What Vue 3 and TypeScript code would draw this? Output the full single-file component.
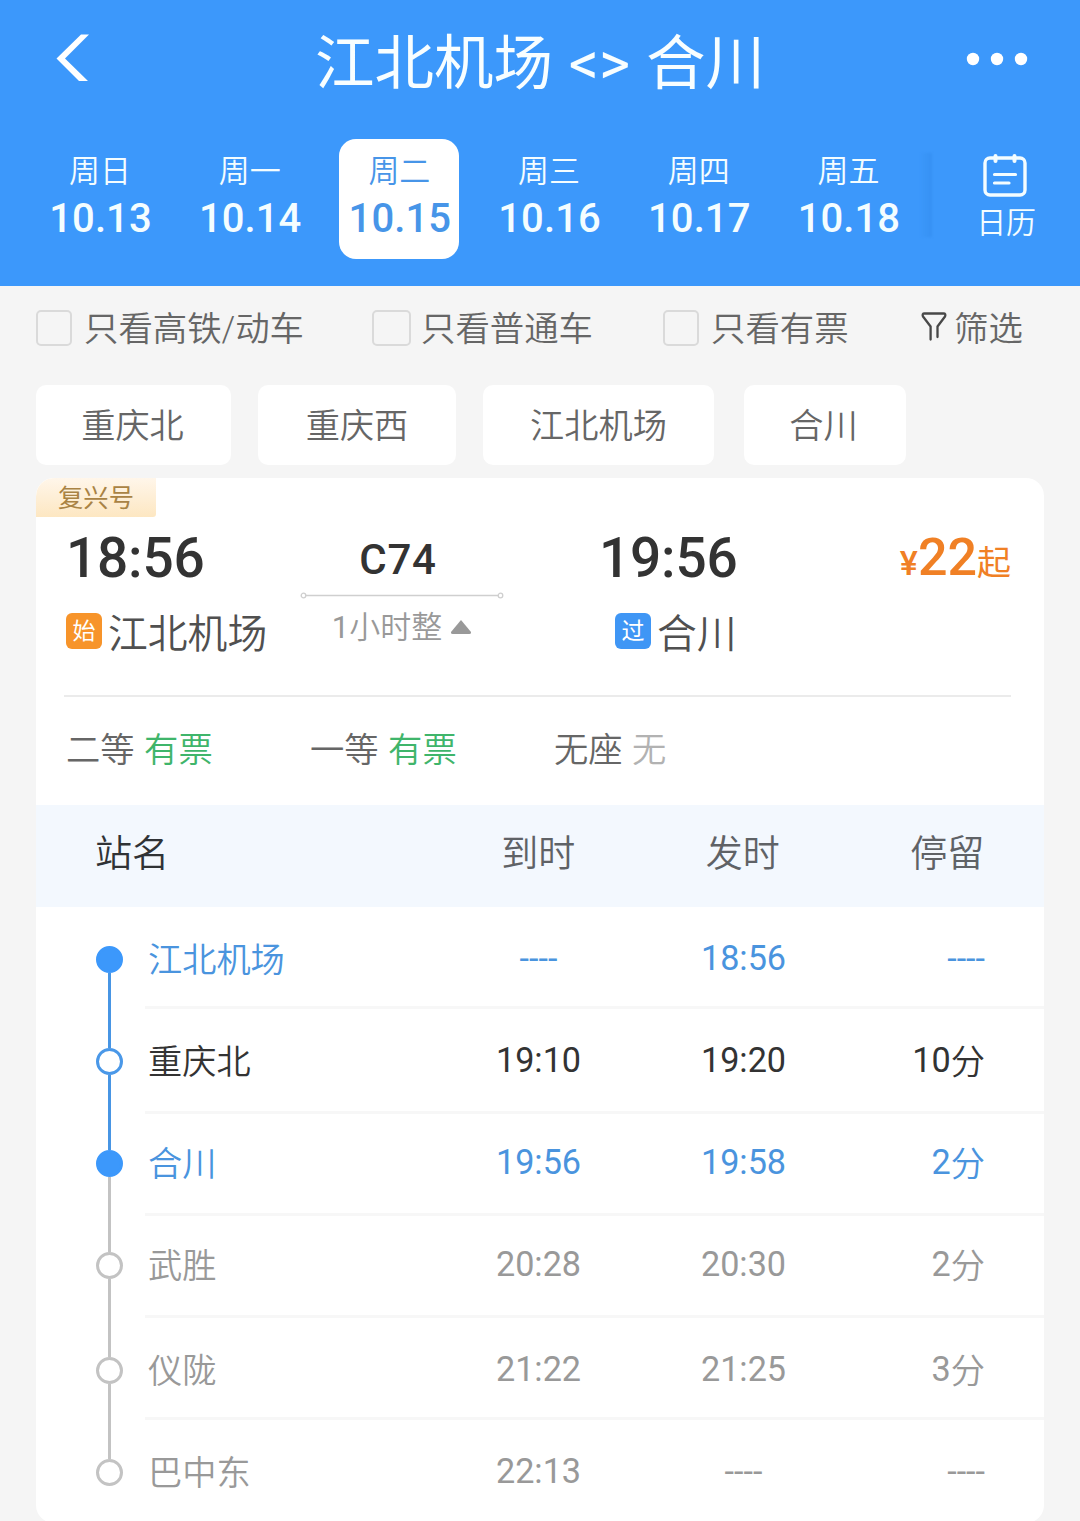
<script setup lang="ts">
interface Day { week: string; date: string; active?: boolean }
interface Stop {
  name: string
  arrive: string
  depart: string
  stay: string
  unit?: string
  tone: 'blue' | 'dark' | 'grey'
  solid?: boolean
  above?: string
  below?: string
  height: number
  center: number
}

const days: Day[] = [
  { week: '周日', date: '10.13' },
  { week: '周一', date: '10.14' },
  { week: '周二', date: '10.15', active: true },
  { week: '周三', date: '10.16' },
  { week: '周四', date: '10.17' },
  { week: '周五', date: '10.18' },
]

const checks = [
  { label: '只看高铁/动车', cls: 'c1' },
  { label: '只看普通车', cls: 'c2' },
  { label: '只看有票', cls: 'c3' },
]

const stations = [
  { label: '重庆北', cls: 's1' },
  { label: '重庆西', cls: 's2' },
  { label: '江北机场', cls: 's3' },
  { label: '合川', cls: 's4' },
]

const seats = [
  { kind: '二等', left: '有票', ok: true },
  { kind: '一等', left: '有票', ok: true },
  { kind: '无座', left: '无', ok: false },
]

const stops: Stop[] = [
  { name: '江北机场', arrive: '----', depart: '18:56', stay: '----', tone: 'blue', solid: true, below: 'on', height: 102, center: 52.5 },
  { name: '重庆北', arrive: '19:10', depart: '19:20', stay: '10', unit: '分', tone: 'dark', above: 'on', below: 'on', height: 105, center: 52.5 },
  { name: '合川', arrive: '19:56', depart: '19:58', stay: '2', unit: '分', tone: 'blue', solid: true, above: 'on', below: 'off', height: 102, center: 49.5 },
  { name: '武胜', arrive: '20:28', depart: '20:30', stay: '2', unit: '分', tone: 'grey', above: 'off', below: 'off', height: 102, center: 49.5 },
  { name: '仪陇', arrive: '21:22', depart: '21:25', stay: '3', unit: '分', tone: 'grey', above: 'off', below: 'off', height: 102, center: 52.5 },
  { name: '巴中东', arrive: '22:13', depart: '----', stay: '----', tone: 'grey', above: 'off', height: 103, center: 52.5 },
]
</script>

<template>
  <div class="page">
    <header class="top">
      <div class="nav">
        <svg class="back" width="36" height="50" viewBox="0 0 36 50">
          <path d="M26 1.500h8L10 25.5 33 48h-9L1.500 25.5z" fill="#fff" />
        </svg>
        <h1 class="title">江北机场 &lt;&gt; 合川</h1>
        <svg class="more" width="62" height="14" viewBox="0 0 62 14" fill="#fff">
          <circle cx="7" cy="7" r="6.2" /><circle cx="31" cy="7" r="6.2" /><circle cx="55" cy="7" r="6.2" />
        </svg>
      </div>
      <div class="dates">
        <div v-for="d in days" :key="d.date" class="day" :class="{ active: d.active }">
          <span class="week">{{ d.week }}</span>
          <span class="date">{{ d.date }}</span>
        </div>
        <div class="shade"></div>
        <div class="calendar">
          <svg width="44" height="44" viewBox="0 0 44 44" fill="none" stroke="#f4fdff" stroke-linecap="round">
            <rect x="2" y="5" width="40" height="37" rx="5" stroke-width="3.4" />
            <path d="M12.500 3v5M31.500 3v5" stroke-width="4" />
            <path d="M11.500 21.500h21M11.500 30h14.500" stroke-width="3.2" />
          </svg>
          <span>日历</span>
        </div>
      </div>
    </header>

    <div class="filters">
      <label v-for="c in checks" :key="c.cls" class="check" :class="c.cls">
        <i class="box"></i><span>{{ c.label }}</span>
      </label>
      <div class="sift">
        <svg width="26" height="32" viewBox="0 0 26 32" fill="none" stroke="#484848" stroke-width="2.3" stroke-linecap="round" stroke-linejoin="round">
          <path d="M9.600 28.500V15.500L2 5.500Q.800 2.500 3.500 2.500H22.500Q25.200 2.500 24 5.500L16.500 15.500V26" />
        </svg>
        <span>筛选</span>
      </div>
    </div>

    <div class="stations">
      <div v-for="s in stations" :key="s.cls" class="chip" :class="s.cls">{{ s.label }}</div>
    </div>

    <section class="card">
      <div class="tag">复兴号</div>
      <div class="trip">
        <div class="from">
          <div class="clock">18:56</div>
          <div class="place"><b class="badge orange">始</b><span>江北机场</span></div>
        </div>
        <div class="middle">
          <div class="code">C74</div>
          <svg class="track" width="204" height="8" viewBox="0 0 204 8" fill="none" stroke="#cfcfcf" stroke-width="1.3">
            <circle cx="3.500" cy="3.500" r="2.300" /><path d="M6 3.500h192" /><circle cx="200.500" cy="3.500" r="2.300" />
          </svg>
          <div class="span"><span class="hours">1</span>小时整<svg width="22" height="16" viewBox="0 0 22 16"><path d="M11 1 21 13Q21.500 15 19.500 15H2.500Q.5 15 1 13z" fill="#999" /></svg></div>
        </div>
        <div class="to">
          <div class="clock">19:56</div>
          <div class="place"><b class="badge azure">过</b><span>合川</span></div>
        </div>
        <div class="price"><span class="yen">¥</span><span class="num">22</span><span class="up">起</span></div>
      </div>
      <div class="rule"></div>
      <div class="seats">
        <div v-for="s in seats" :key="s.kind" class="seat">
          {{ s.kind }}<span :class="s.ok ? 'yes' : 'no'">{{ s.left }}</span>
        </div>
      </div>

      <div class="head">
        <span class="h-name">站名</span><span>到时</span><span>发时</span><span>停留</span>
      </div>
      <div v-for="s in stops" :key="s.name" class="stop" :class="s.tone" :style="{ height: s.height + 'px' }">
        <div class="rail">
          <i class="seg" :class="s.above" :style="{ height: s.center - 13.5 + 'px' }"></i>
          <i class="dot" :class="{ solid: s.solid, on: s.tone !== 'grey' }"></i>
          <i class="seg grow" :class="s.below"></i>
        </div>
        <div class="line" :style="{ paddingTop: s.center - 19.5 + 'px' }">
          <span class="name">{{ s.name }}</span>
          <span class="time">{{ s.arrive }}</span>
          <span class="time">{{ s.depart }}</span>
          <span class="stay">{{ s.stay }}<span v-if="s.unit" class="unit">{{ s.unit }}</span></span>
        </div>
      </div>
    </section>
  </div>
</template>

<style>
body { background: #f5f5f5; overflow: hidden; }
</style>

<style scoped>
.page {
  width: 1080px; height: 1521px; overflow: hidden; background: #f5f5f5;
  font-family: Roboto, "Noto Sans CJK SC", sans-serif; color: #666; font-weight: 350;
}
.page, .page * { box-sizing: border-box; }
i { font-style: normal; display: block; }
.top { height: 286px; background: #3c98fb; color: #f4fdff; }
.nav { height: 139px; padding: 33px 52px 0 55px; display: flex; justify-content: space-between; align-items: flex-start; }
.title { margin: -1px 0 0 23px; font-size: 59.500px; line-height: 64px; font-weight: 400; white-space: pre; word-spacing: 1px; color: #f8feff; }
.more { margin-top: 19px; }
.dates { display: flex; padding-left: 40px; }
.day {
  width: 120px; height: 120px; margin-right: 29.7px; flex: none; border-radius: 17px;
  display: flex; flex-direction: column; align-items: center; padding-top: 12px;
}
.day.active { background: #fff; color: #4795e8; }
.week { font-size: 31px; line-height: 41px; }
.date { font-size: 40px; line-height: 53px; font-weight: 500; letter-spacing: .1px; padding-left: 1px; }
.shade { width: 12px; height: 84px; margin: 14px 0 0 -18px; background: linear-gradient(90deg, rgba(45,135,232,0), rgba(45,135,232,.4)); filter: blur(1px); }
.calendar { margin-left: 43px; padding-top: 14px; display: flex; flex-direction: column; align-items: center; width: 62px; font-size: 30px; }
.calendar svg { margin-left: -3px; }
.calendar span { line-height: 36px; margin-top: 8px; }
.filters { height: 99px; display: flex; align-items: flex-start; padding: 23px 0 0 36px; font-size: 34.400px; line-height: 41px; }
.check { display: flex; align-items: center; flex: none; white-space: nowrap; }
.box { width: 36px; height: 36px; border: 2.5px solid #dadada; border-radius: 5px; margin: -4px 12px 0 0; }
.c1 { width: 336px; }
.c2 { width: 291px; }
.c2 .box { width: 39px; margin-right: 10px; }
.c3 { width: 258px; }
.sift { display: flex; }
.sift svg { margin: 2px 7px 0 0; }
.stations { display: flex; height: 93px; }
.chip { height: 80px; background: #fff; border-radius: 10px; font-size: 34.200px; line-height: 82px; text-align: center; flex: none; }
.s1 { width: 195px; margin-left: 36px; padding-right: 2px; }
.s2 { width: 198px; margin-left: 27px; }
.s3 { width: 231px; margin-left: 27px; }
.s4 { width: 162px; margin-left: 30px; padding-right: 3px; }
.card { width: 1008px; margin-left: 36px; background: #fff; border-radius: 18px; overflow: hidden; }
.tag {
  width: 120px; height: 39px; background: linear-gradient(#fff6ea, #fde7c2); color: #a98344;
  font-size: 25.300px; line-height: 41px; text-align: center; font-weight: 400; border-radius: 18px 0 3px 0;
}
.trip { height: 178px; display: flex; padding-left: 30px; }
.from { width: 235px; }
.clock { font-size: 55px; line-height: 66px; margin-top: 8px; font-weight: 500; color: #333; letter-spacing: -.2px; }
.place { display: flex; align-items: center; font-size: 39.800px; line-height: 48px; color: #505050; margin-top: 17px; white-space: nowrap; }
.place span { margin-top: 4px; line-height: 46px; }
.badge { width: 36px; height: 36px; border-radius: 6px; color: #fff; font-size: 23px; line-height: 38px; font-weight: 400; text-align: center; margin: -5px 6px 0 0; }
.orange { background: #f7942a; }
.azure { background: #3f96f5; }
.middle { width: 204px; display: flex; flex-direction: column; align-items: center; margin: 0 95px 0 -1px; }
.code { font-size: 42px; line-height: 50px; margin: 18px 0 0 -8px; color: #333; font-weight: 500; letter-spacing: .8px; }
.track { margin-top: 7px; }
.span { font-size: 31px; line-height: 40px; margin-top: 8px; color: #999; white-space: nowrap; }
.span svg { margin: 0 0 3px 8px; }
.hours { font-weight: 400; }
.to { width: 260px; }
.to .place { padding-left: 16px; }
.price { flex: 1; text-align: right; padding: 8px 33px 0 0; line-height: 66px; color: #f08025; font-weight: 500; white-space: nowrap; }
.yen { font-size: 34px; }
.num { font-size: 52px; }
.up { font-size: 34px; font-weight: 400; }
.rule { height: 2px; margin: 0 33px 0 28px; background: #ebebeb; }
.seats { height: 108px; display: flex; padding: 32px 0 0 30px; font-size: 34.300px; line-height: 42px; }
.seat { width: 244px; }
.seat span { margin-left: 9.500px; }
.yes { color: #3fb56b; }
.no { color: #b2b2b2; }
.head { height: 102px; background: #f3f8fe; display: flex; font-size: 37px; line-height: 99px; padding-left: 59px; color: #5f6266; }
.head span { width: 204.500px; text-align: center; flex: none; }
.head .h-name { width: 341px; text-align: left; color: #303336; }
.stop { display: flex; padding-left: 59px; }
.rail { width: 29px; display: flex; flex-direction: column; align-items: center; margin-right: 21px; }
.seg { width: 3px; flex: none; }
.grow { flex: 1; }
.seg.on { background: #4795e4; }
.seg.off { background: #c3c3c3; }
.dot { width: 27px; height: 27px; border: 3px solid #c3c3c3; border-radius: 50%; flex: none; }
.dot.on { border-color: #4a98e8; }
.dot.solid { background: #3c98fb; border-color: #3c98fb; }
.line { flex: 1; display: flex; border-bottom: 3px solid #f7f7f7; font-size: 34.200px; line-height: 40px; padding-left: 3px; }
.stop:last-child .line { border-bottom: 0; }
.name { width: 288px; }
.time { width: 205px; text-align: center; margin-top: -2px; font-weight: 400; }
.stay { flex: 1; text-align: right; padding-right: 59px; margin-top: -2px; font-weight: 400; }
.unit { display: inline-block; line-height: 36px; vertical-align: -2px; font-weight: 350; }
.blue { color: #4a94de; }
.dark { color: #333; }
.grey { color: #999; }
</style>
